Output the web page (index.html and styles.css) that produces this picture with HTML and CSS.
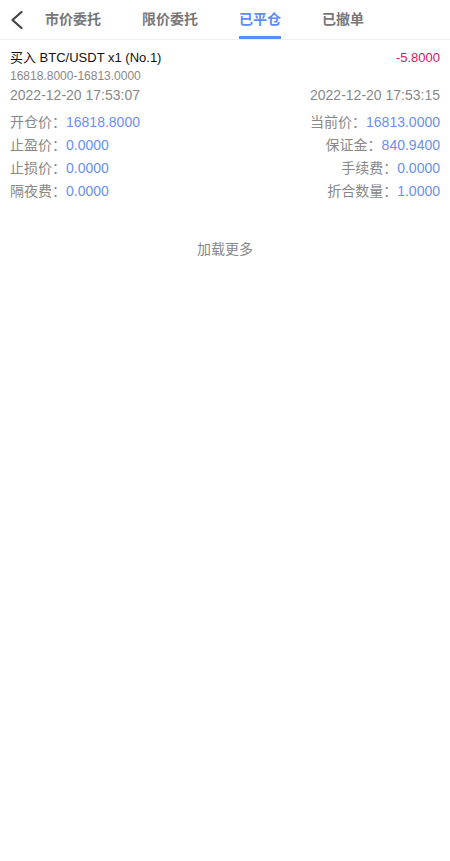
FILE: index.html
```html
<!DOCTYPE html>
<html lang="zh-CN">
<head>
<meta charset="utf-8">
<link rel="stylesheet" href="styles.css">
</head>
<body>
<div class="page">
  <header class="nav">
    <div class="back">
      <svg width="14" height="20" viewBox="0 0 14 20"><path d="M12.5 2 L3.5 10 L12.5 18" fill="none" stroke="#444" stroke-width="2.2" stroke-linecap="round" stroke-linejoin="round"/></svg>
    </div>
    <div class="tabs">
      <div class="tab">市价委托</div>
      <div class="tab">限价委托</div>
      <div class="tab active">已平仓</div>
      <div class="tab">已撤单</div>
    </div>
  </header>
  <section class="card">
    <div class="row top">
      <span class="title">买入 BTC/USDT x1 (No.1)</span>
      <span class="pnl">-5.8000</span>
    </div>
    <div class="range">16818.8000-16813.0000</div>
    <div class="row dates">
      <span>2022-12-20 17:53:07</span>
      <span>2022-12-20 17:53:15</span>
    </div>
    <div class="grid">
      <div class="row kv"><span>开仓价：<b>16818.8000</b></span><span>当前价：<b>16813.0000</b></span></div>
      <div class="row kv"><span>止盈价：<b>0.0000</b></span><span>保证金：<b>840.9400</b></span></div>
      <div class="row kv"><span>止损价：<b>0.0000</b></span><span>手续费：<b>0.0000</b></span></div>
      <div class="row kv"><span>隔夜费：<b>0.0000</b></span><span>折合数量：<b>1.0000</b></span></div>
    </div>
  </section>
  <div class="more">加载更多</div>
</div>
</body>
</html>
```

FILE: styles.css
```css
* { box-sizing: border-box; }
html, body { margin: 0; padding: 0; background: #fff; }
body {
  font-family: "Liberation Sans", Arial, "Noto Sans CJK SC", sans-serif;
  color: #333;
}
.page { width: 450px; }
.nav {
  display: flex;
  align-items: stretch;
  height: 40px;
  border-bottom: 1px solid #efefef;
}
.back {
  width: 45px;
  display: flex;
  align-items: center;
  padding-left: 9px;
}
.back svg { display: block; }
.tabs {
  display: flex;
  gap: 41px;
}
.tab {
  font-size: 14px;
  font-weight: bold;
  color: #777;
  line-height: 39px;
  height: 39px;
  position: relative;
}
.tab.active { color: #5b8cf7; }
.tab.active::after {
  content: "";
  position: absolute;
  left: 0; right: 0; bottom: 0;
  height: 3px;
  background: #5b8cf7;
}
.card { padding: 9px 10px 0 10px; }
.row {
  display: flex;
  justify-content: space-between;
  align-items: center;
}
.top { font-size: 13px; line-height: 18px; }
.title { color: #111; }
.pnl { color: #e0105e; font-size: 13px; }
.range { font-size: 12px; color: #888; line-height: 18px; }
.dates { font-size: 14px; color: #888; line-height: 20px; }
.grid { margin-top: 6px; }
.kv { font-size: 14px; color: #888; line-height: 23px; }
.kv b { font-weight: normal; color: #6b8ef5; }
.more {
  text-align: center;
  font-size: 14px;
  color: #888;
  margin-top: 35px;
}
```
